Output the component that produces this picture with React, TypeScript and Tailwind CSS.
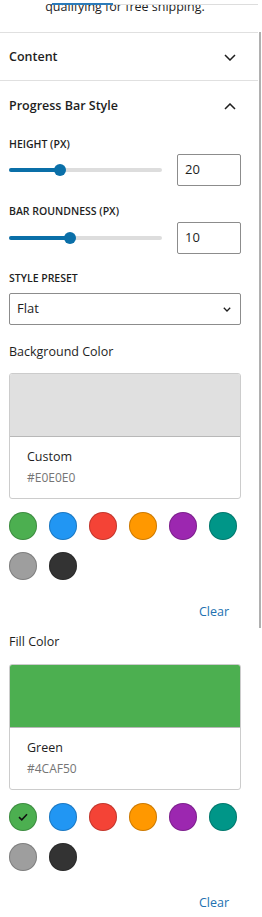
import React from "react";

const font = "font-['Open_Sans','Noto_Sans',sans-serif]";

function ChevronDown({ className = "" }: { className?: string }) {
  return (
    <svg width="12" height="7" viewBox="0 0 12 7" className={className}>
      <path d="M1 1l5 5 5-5" fill="none" stroke="#1e1e1e" strokeWidth="1.5" />
    </svg>
  );
}
function ChevronUp() {
  return (
    <svg width="12" height="7" viewBox="0 0 12 7">
      <path d="M1 6l5-5 5 5" fill="none" stroke="#1e1e1e" strokeWidth="1.5" />
    </svg>
  );
}

function Slider({ pos, value }: { pos: number; value: string }) {
  return (
    <div className="flex items-center h-[32px]">
      <div className="relative w-[153px] h-[12px]">
        <div className="absolute left-0 right-0 top-[4px] h-[4px] rounded-full bg-[#dddddd]" />
        <div className="absolute left-0 top-[4px] h-[4px] rounded-full bg-[#0a6fa8]" style={{ width: pos }} />
        <div className="absolute top-0 w-[12px] h-[12px] rounded-full bg-[#0a6fa8]" style={{ left: pos - 6 }} />
      </div>
      <div className="ml-auto w-[64px] h-[32px] border border-[#8c8c8c] rounded-[2px] flex items-center px-[7px] text-[13px] text-[#1e1e1e]">
        {value}
      </div>
    </div>
  );
}

const swatches = ["#4caf50", "#2196f3", "#f44336", "#ff9800", "#9c27b0", "#009688", "#9e9e9e", "#333333"];

function Swatches({ selected }: { selected?: number }) {
  return (
    <div className="grid grid-cols-[repeat(6,28px)] gap-[12px]">
      {swatches.map((c, i) => (
        <div
          key={c}
          className="w-[28px] h-[28px] rounded-full shadow-[inset_0_0_0_1px_rgba(0,0,0,0.2)] flex items-center justify-center"
          style={{ backgroundColor: c }}
        >
          {selected === i && (
            <svg width="12" height="10" viewBox="0 0 12 10">
              <path d="M2 5.2l2.8 2.6L10 2.2" fill="none" stroke="#111" strokeWidth="1.6" />
            </svg>
          )}
        </div>
      ))}
    </div>
  );
}

function ColorCard({ color, name, hex }: { color: string; name: string; hex: string }) {
  return (
    <div className="border border-[#cccccc] rounded-[3px] overflow-hidden">
      <div className="h-[63px] border-b border-[#b8b8b8]" style={{ backgroundColor: color }} />
      <div className="h-[61px] pl-[17px] pt-[11px]">
        <div className="text-[12.5px] leading-[18px] text-[#1e1e1e]">{name}</div>
        <div className="mt-[4px] text-[12px] leading-[16px] text-[#757575]">{hex}</div>
      </div>
    </div>
  );
}

export default function App() {
  return (
    <div className={`relative w-[262px] h-[917px] bg-white overflow-hidden ${font}`}>
      <div className="absolute left-[259px] top-[32px] w-[2px] h-[596px] bg-[#b0b0b0]" />
      <div className="w-[258px]">
        <div className="relative h-[33px] border-b border-[#e0e0e0] overflow-hidden">
          <div className="pl-[9px] pr-[17px] mt-[-2px] text-center text-[12.5px] leading-[18px] text-[#1e1e1e]">
            qualifying for free shipping.
          </div>
          <div className="absolute left-0 top-0 w-full h-[4px] bg-white" />
          <div className="absolute left-[113px] right-0 top-[4px] h-px bg-[#dddddd]" />
          <div className="absolute left-[52px] w-[61px] top-[3px] h-[2px] bg-[#2b7bb9]" />
        </div>

        <div className="h-[48px] border-b border-[#e0e0e0] flex items-center justify-between pl-[9px] pr-[22px] pt-[1px]">
          <span className="text-[12.5px] font-semibold text-[#1e1e1e]">Content</span>
          <ChevronDown />
        </div>

        <div className="h-[50px] flex items-center justify-between pl-[9px] pr-[22px] pt-[1px]">
          <span className="text-[12.5px] font-semibold text-[#1e1e1e]">Progress Bar Style</span>
          <ChevronUp />
        </div>

        <div className="pl-[9px] pr-[17px] flex flex-col">
          <div className="mt-[5px] h-[16px] leading-[16px] text-[10.5px] font-semibold uppercase text-[#1e1e1e]">
            Height (px)
          </div>
          <div className="mt-[2px]">
            <Slider pos={51} value="20" />
          </div>
          <div className="mt-[17px] h-[16px] leading-[16px] text-[10.5px] font-semibold uppercase text-[#1e1e1e]">
            Bar Roundness (px)
          </div>
          <div className="mt-[3px]">
            <Slider pos={61} value="10" />
          </div>
          <div className="mt-[16px] h-[16px] leading-[16px] text-[10.5px] font-semibold uppercase text-[#1e1e1e]">
            Style Preset
          </div>
          <div className="mt-[7px] h-[32px] border border-[#8c8c8c] rounded-[2px] flex items-center justify-between pl-[7px] pr-[9px] text-[13px] text-[#1e1e1e]">
            <span>Flat</span>
            <svg width="8" height="5" viewBox="0 0 8 5">
              <path d="M0.8 0.8l3.2 3.2 3.2-3.2" fill="none" stroke="#1e1e1e" strokeWidth="1.3" />
            </svg>
          </div>

          <div className="mt-[18px] h-[18px] leading-[18px] text-[12.5px] text-[#1e1e1e]">Background Color</div>
          <div className="mt-[12px]">
            <ColorCard color="#e0e0e0" name="Custom" hex="#E0E0E0" />
          </div>
          <div className="mt-[13px]">
            <Swatches />
          </div>
          <div className="mt-[16px] flex justify-end">
            <span className="h-[32px] px-[12px] pt-[1px] flex items-center text-[12.5px] text-[#2271b1]">Clear</span>
          </div>

          <div className="mt-[5px] h-[18px] leading-[18px] text-[12.5px] text-[#1e1e1e]">Fill Color</div>
          <div className="mt-[13px]">
            <ColorCard color="#4caf50" name="Green" hex="#4CAF50" />
          </div>
          <div className="mt-[13px]">
            <Swatches selected={0} />
          </div>
          <div className="mt-[16px] flex justify-end">
            <span className="h-[32px] px-[12px] pt-[1px] flex items-center text-[12.5px] text-[#2271b1]">Clear</span>
          </div>
        </div>
      </div>
    </div>
  );
}
